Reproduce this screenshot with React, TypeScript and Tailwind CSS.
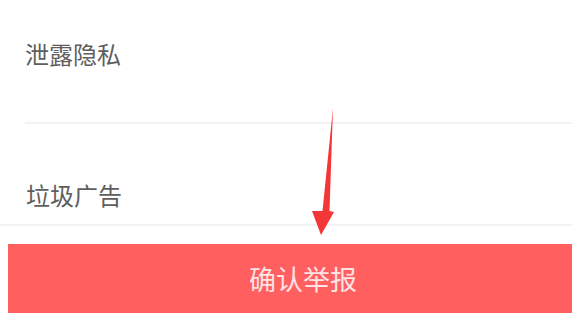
export default function App() {
  return (
    <div
      className="relative w-[572px] h-[318px] overflow-hidden bg-white"
      style={{ fontFamily: '"Noto Sans CJK SC", "Noto Sans", sans-serif' }}
    >
      <div className="pl-[25px]">
        <div className="h-[122px] pt-[42px] text-[24px] leading-[24px] text-[#5e5e5e]">泄露隐私</div>
        <div className="h-[2px] bg-[#f2f2f2]" />
      </div>
      <div className="h-[100px] pl-[26px] pt-[59px] text-[24px] leading-[24px] text-[#5e5e5e]">垃圾广告</div>
      <div className="h-[2px] bg-[#f2f2f2]" />
      <div className="h-[18px]" />
      <div className="ml-[8px] w-[590px] h-[69px] bg-[#ff5f5f] flex items-center justify-center text-[27px] leading-[27px] text-[#fde3e3]">
        确认举报
      </div>
      <svg
        className="absolute left-0 top-0"
        width="572"
        height="318"
        viewBox="0 0 572 318"
      >
        <polygon
          points="333,108 329.5,211 334,212 321,235 312,211 322.5,211"
          fill="#f53636"
        />
      </svg>
    </div>
  );
}
